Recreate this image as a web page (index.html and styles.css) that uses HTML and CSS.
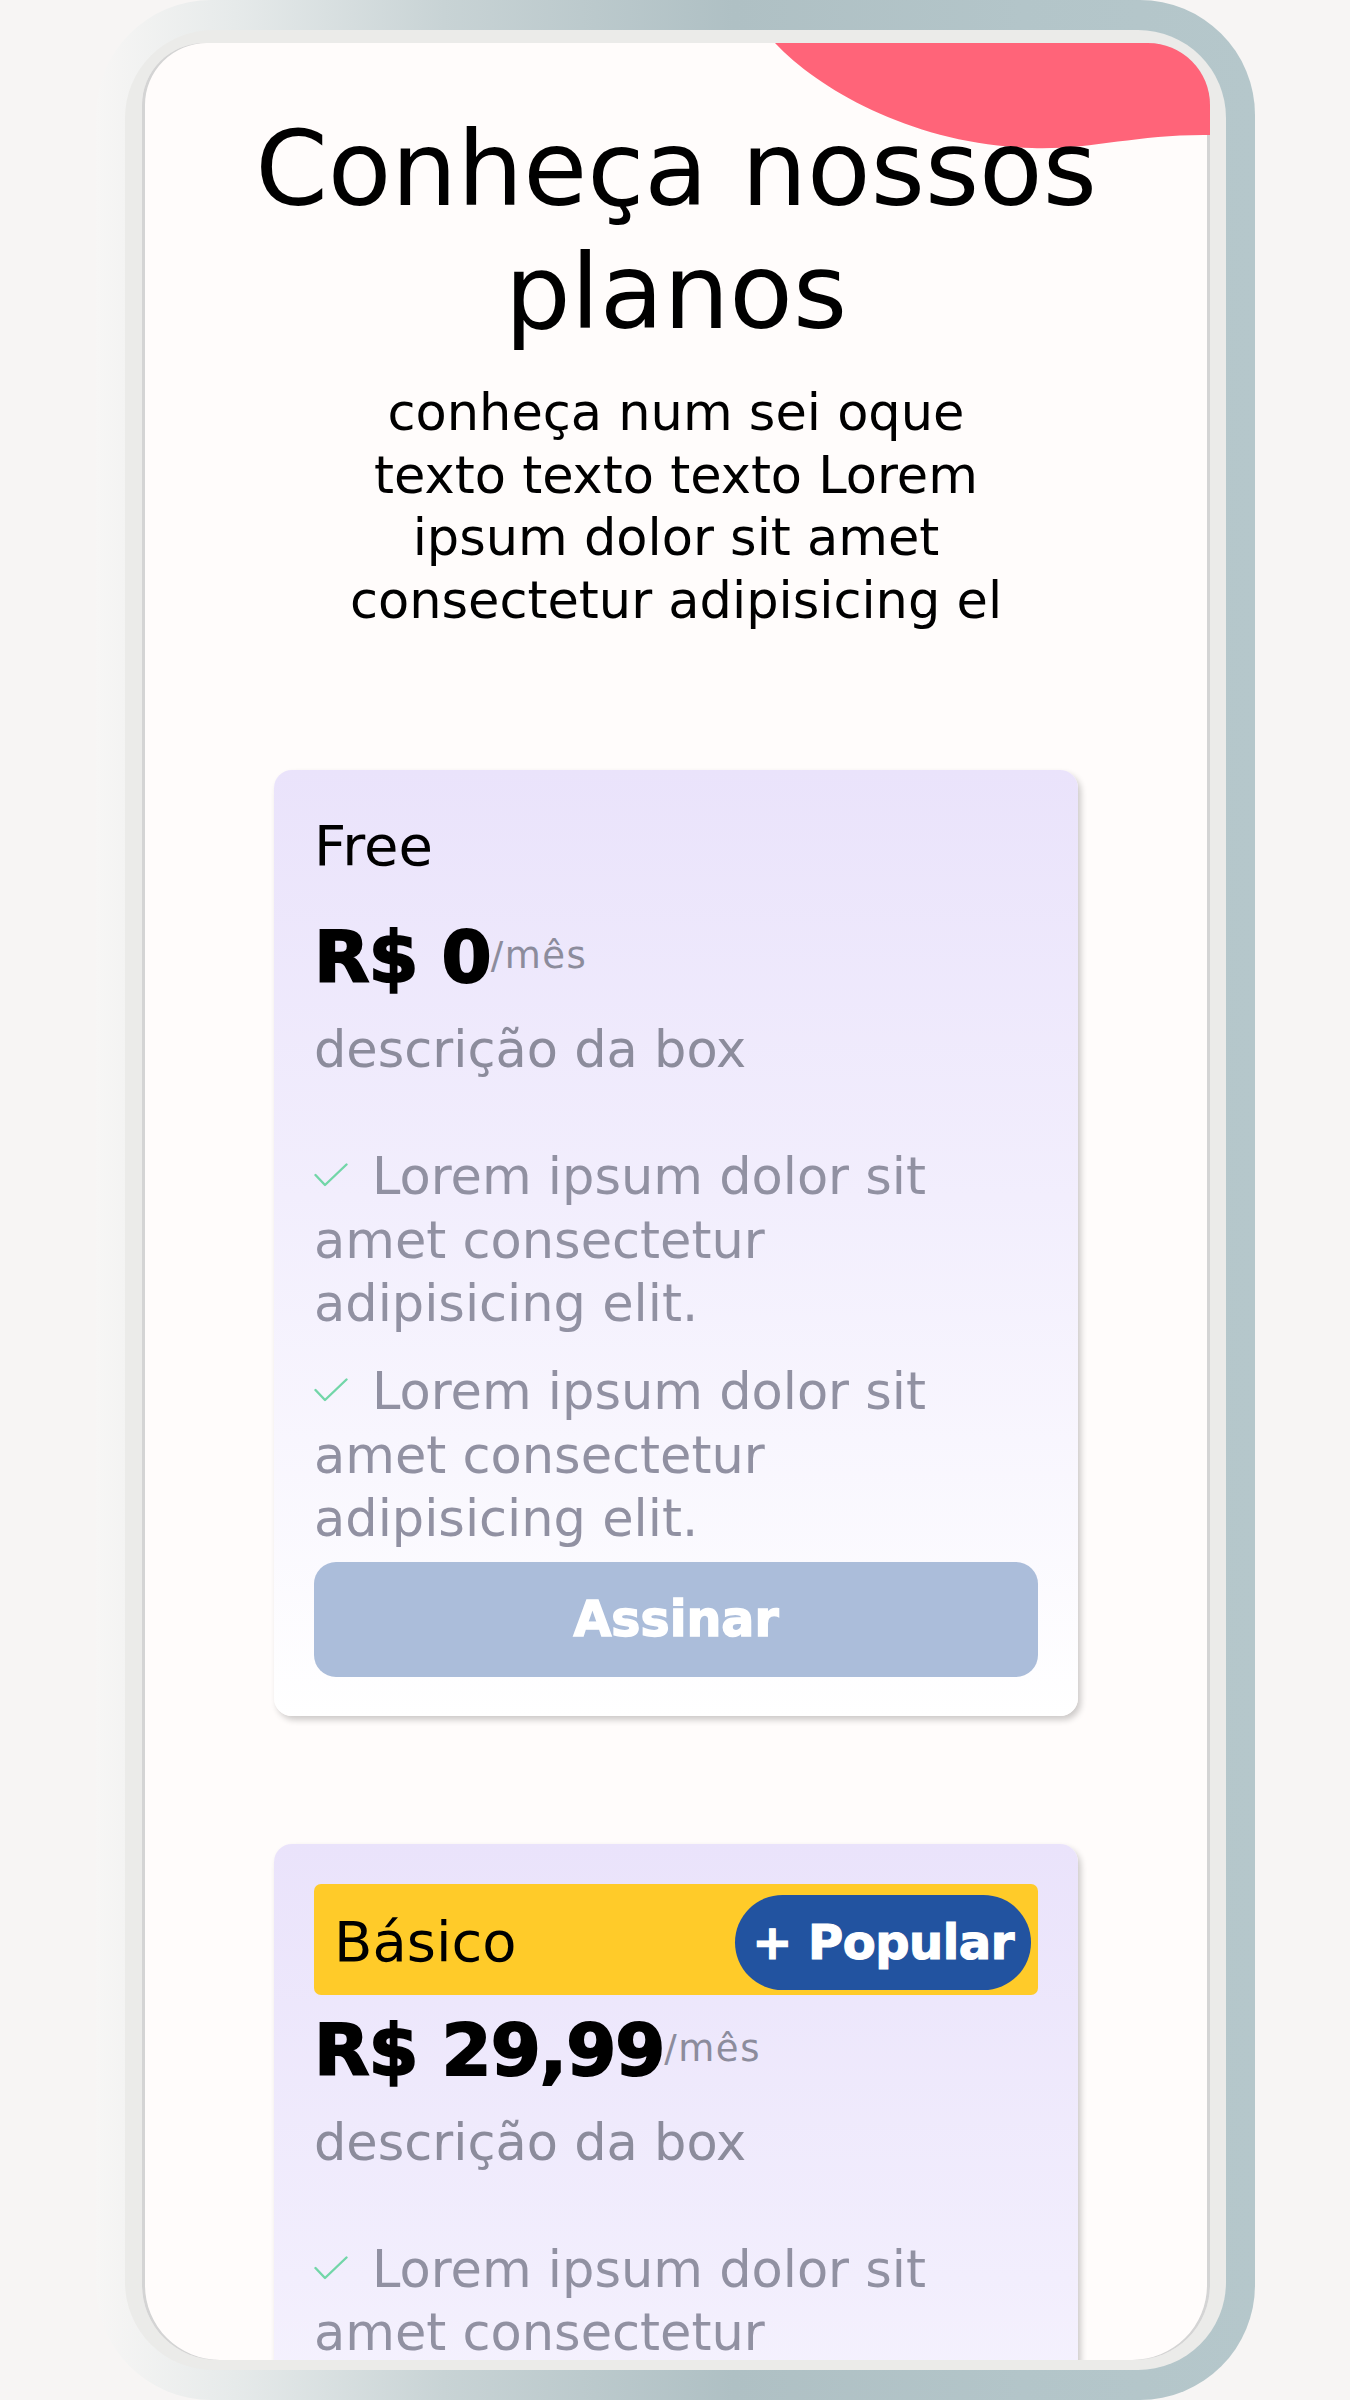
FILE: index.html
```html
<!DOCTYPE html>
<html lang="pt-BR">
<head>
<meta charset="utf-8">
<title>Conheça nossos planos</title>
<link rel="stylesheet" href="styles.css">
</head>
<body>
<div class="page">
  <div class="phone">
    <div class="bezel">
      <div class="screen">
        <svg class="blob" viewBox="0 0 1068 110" width="1068" height="110" aria-hidden="true">
          <path d="M633 0 C678 48 775 102 890 105 C948 107 995 91 1068 92 V0 Z" fill="#ff6479"/>
        </svg>
        <main class="content">
          <h1 class="title">Conheça nossos planos</h1>
          <p class="subtitle">conheça num sei oque texto texto texto Lorem ipsum dolor sit amet consectetur adipisicing el</p>

          <div class="plans">
            <section class="card">
              <h2 class="plan-name">Free</h2>
              <div class="price">R$ 0<span class="per">/mês</span></div>
              <p class="desc">descrição da box</p>
              <ul class="features">
                <li><svg class="check" viewBox="0 0 34 24" width="34" height="24" aria-hidden="true"><path d="M1.5 12 L11 22 L32.5 1.5" fill="none" stroke="#72d6a8" stroke-width="2.4" stroke-linecap="round" stroke-linejoin="round"/></svg>Lorem ipsum dolor sit amet consectetur adipisicing elit.</li>
                <li><svg class="check" viewBox="0 0 34 24" width="34" height="24" aria-hidden="true"><path d="M1.5 12 L11 22 L32.5 1.5" fill="none" stroke="#72d6a8" stroke-width="2.4" stroke-linecap="round" stroke-linejoin="round"/></svg>Lorem ipsum dolor sit amet consectetur adipisicing elit.</li>
              </ul>
              <button class="btn" type="button">Assinar</button>
            </section>

            <section class="card card-popular">
              <div class="plan-head">
                <h2 class="plan-name">Básico</h2>
                <span class="badge">+ Popular</span>
              </div>
              <div class="price">R$ 29,99<span class="per">/mês</span></div>
              <p class="desc">descrição da box</p>
              <ul class="features">
                <li><svg class="check" viewBox="0 0 34 24" width="34" height="24" aria-hidden="true"><path d="M1.5 12 L11 22 L32.5 1.5" fill="none" stroke="#72d6a8" stroke-width="2.4" stroke-linecap="round" stroke-linejoin="round"/></svg>Lorem ipsum dolor sit amet consectetur adipisicing elit.</li>
                <li><svg class="check" viewBox="0 0 34 24" width="34" height="24" aria-hidden="true"><path d="M1.5 12 L11 22 L32.5 1.5" fill="none" stroke="#72d6a8" stroke-width="2.4" stroke-linecap="round" stroke-linejoin="round"/></svg>Lorem ipsum dolor sit amet consectetur adipisicing elit.</li>
              </ul>
              <button class="btn" type="button">Assinar</button>
            </section>
          </div>
        </main>
      </div>
    </div>
  </div>
</div>
</body>
</html>
```

FILE: styles.css
```css
* {
  box-sizing: border-box;
}

html, body {
  margin: 0;
  padding: 0;
}

body {
  background: #f7f5f4;
  font-family: "DejaVu Sans", "Noto Sans", sans-serif;
  color: #000;
}

.page {
  padding-left: 96px;
  height: 2400px;
  overflow: hidden;
}

.phone {
  width: 1159px;
  height: 2400px;
  padding: 30px 29px 30px 29px;
  border-radius: 115px;
  background: linear-gradient(90deg, #f7f6f5 0%, #e6eaea 12%, #c8d3d5 30%, #afc0c4 55%, #b3c5c9 80%, #b5c7cb 100%);
}

.bezel {
  height: 100%;
  padding: 13px 16px 10px 17px;
  background: #ebebe9;
  border-radius: 88px;
}

.screen {
  position: relative;
  height: 100%;
  overflow: hidden;
  background: #fffcfb;
  border-radius: 62px 62px 75px 75px;
  box-shadow: inset 3px 0 0 #d4d4d4, inset -3px 0 0 #d4d4d4;
}

.blob {
  position: absolute;
  top: 0;
  right: 0;
  display: block;
}

.content {
  position: relative;
  display: flex;
  flex-direction: column;
  align-items: center;
  padding-top: 65px;
}

.title {
  margin: 0;
  font-size: 104px;
  line-height: 123px;
  font-weight: 400;
  text-align: center;
}

.subtitle {
  width: 690px;
  margin: 28px 0 0;
  font-size: 51px;
  line-height: 62.5px;
  text-align: center;
  color: #000;
}

.plans {
  width: 804px;
  margin-top: 138px;
  display: flex;
  flex-direction: column;
  gap: 128px;
}

.card {
  width: 804px;
  padding: 40px 40px 39px;
  border-radius: 18px;
  background: linear-gradient(180deg, #eae3fb 0%, #f2eefd 45%, #ffffff 100%);
  box-shadow: 3px 4px 6px rgba(0, 0, 0, 0.2);
}

.plan-name {
  margin: 3px 0 0;
  font-size: 56px;
  line-height: 66px;
  font-weight: 400;
}

.plan-head {
  display: flex;
  align-items: center;
  justify-content: space-between;
  height: 111px;
  padding: 11px 7px 5px 20px;
  background: #ffcb29;
  border-radius: 7px;
}

.plan-head .plan-name {
  margin: 0;
}

.badge {
  display: flex;
  align-items: center;
  justify-content: center;
  width: 296px;
  height: 95px;
  border-radius: 48px;
  background: #2253a0;
  color: #fff;
  font-size: 48px;
  font-weight: 700;
  letter-spacing: -0.5px;
  -webkit-text-stroke: 1.2px #fff;
}

.price {
  margin-top: 33px;
  font-size: 72px;
  line-height: 90px;
  font-weight: 700;
  letter-spacing: -1px;
  white-space: nowrap;
  -webkit-text-stroke: 2px #000;
}

.card-popular .price {
  margin-top: 10px;
}

.per {
  font-size: 37px;
  line-height: 1;
  font-weight: 400;
  letter-spacing: 1.5px;
  color: #8c8c9c;
  vertical-align: 14px;
  -webkit-text-stroke: 0;
}

.desc {
  margin: 17px 0 0;
  font-size: 51px;
  line-height: 62px;
  color: #8c8c9c;
}

.features {
  margin: 64px 0 0;
  padding: 0;
  list-style: none;
  display: flex;
  flex-direction: column;
  gap: 24.5px;
  font-size: 51px;
  line-height: 63.5px;
  color: #9191a2;
}

.check {
  display: inline-block;
  width: 34px;
  height: 24px;
  margin-right: 24px;
  vertical-align: 7px;
}

.btn {
  display: block;
  width: 100%;
  height: 115px;
  margin-top: 11px;
  border: none;
  border-radius: 22px;
  background: #abbdda;
  color: #fff;
  font-family: "DejaVu Sans", "Noto Sans", sans-serif;
  font-size: 49px;
  font-weight: 700;
  padding: 0;
  -webkit-text-stroke: 1.5px #fff;
}
```
